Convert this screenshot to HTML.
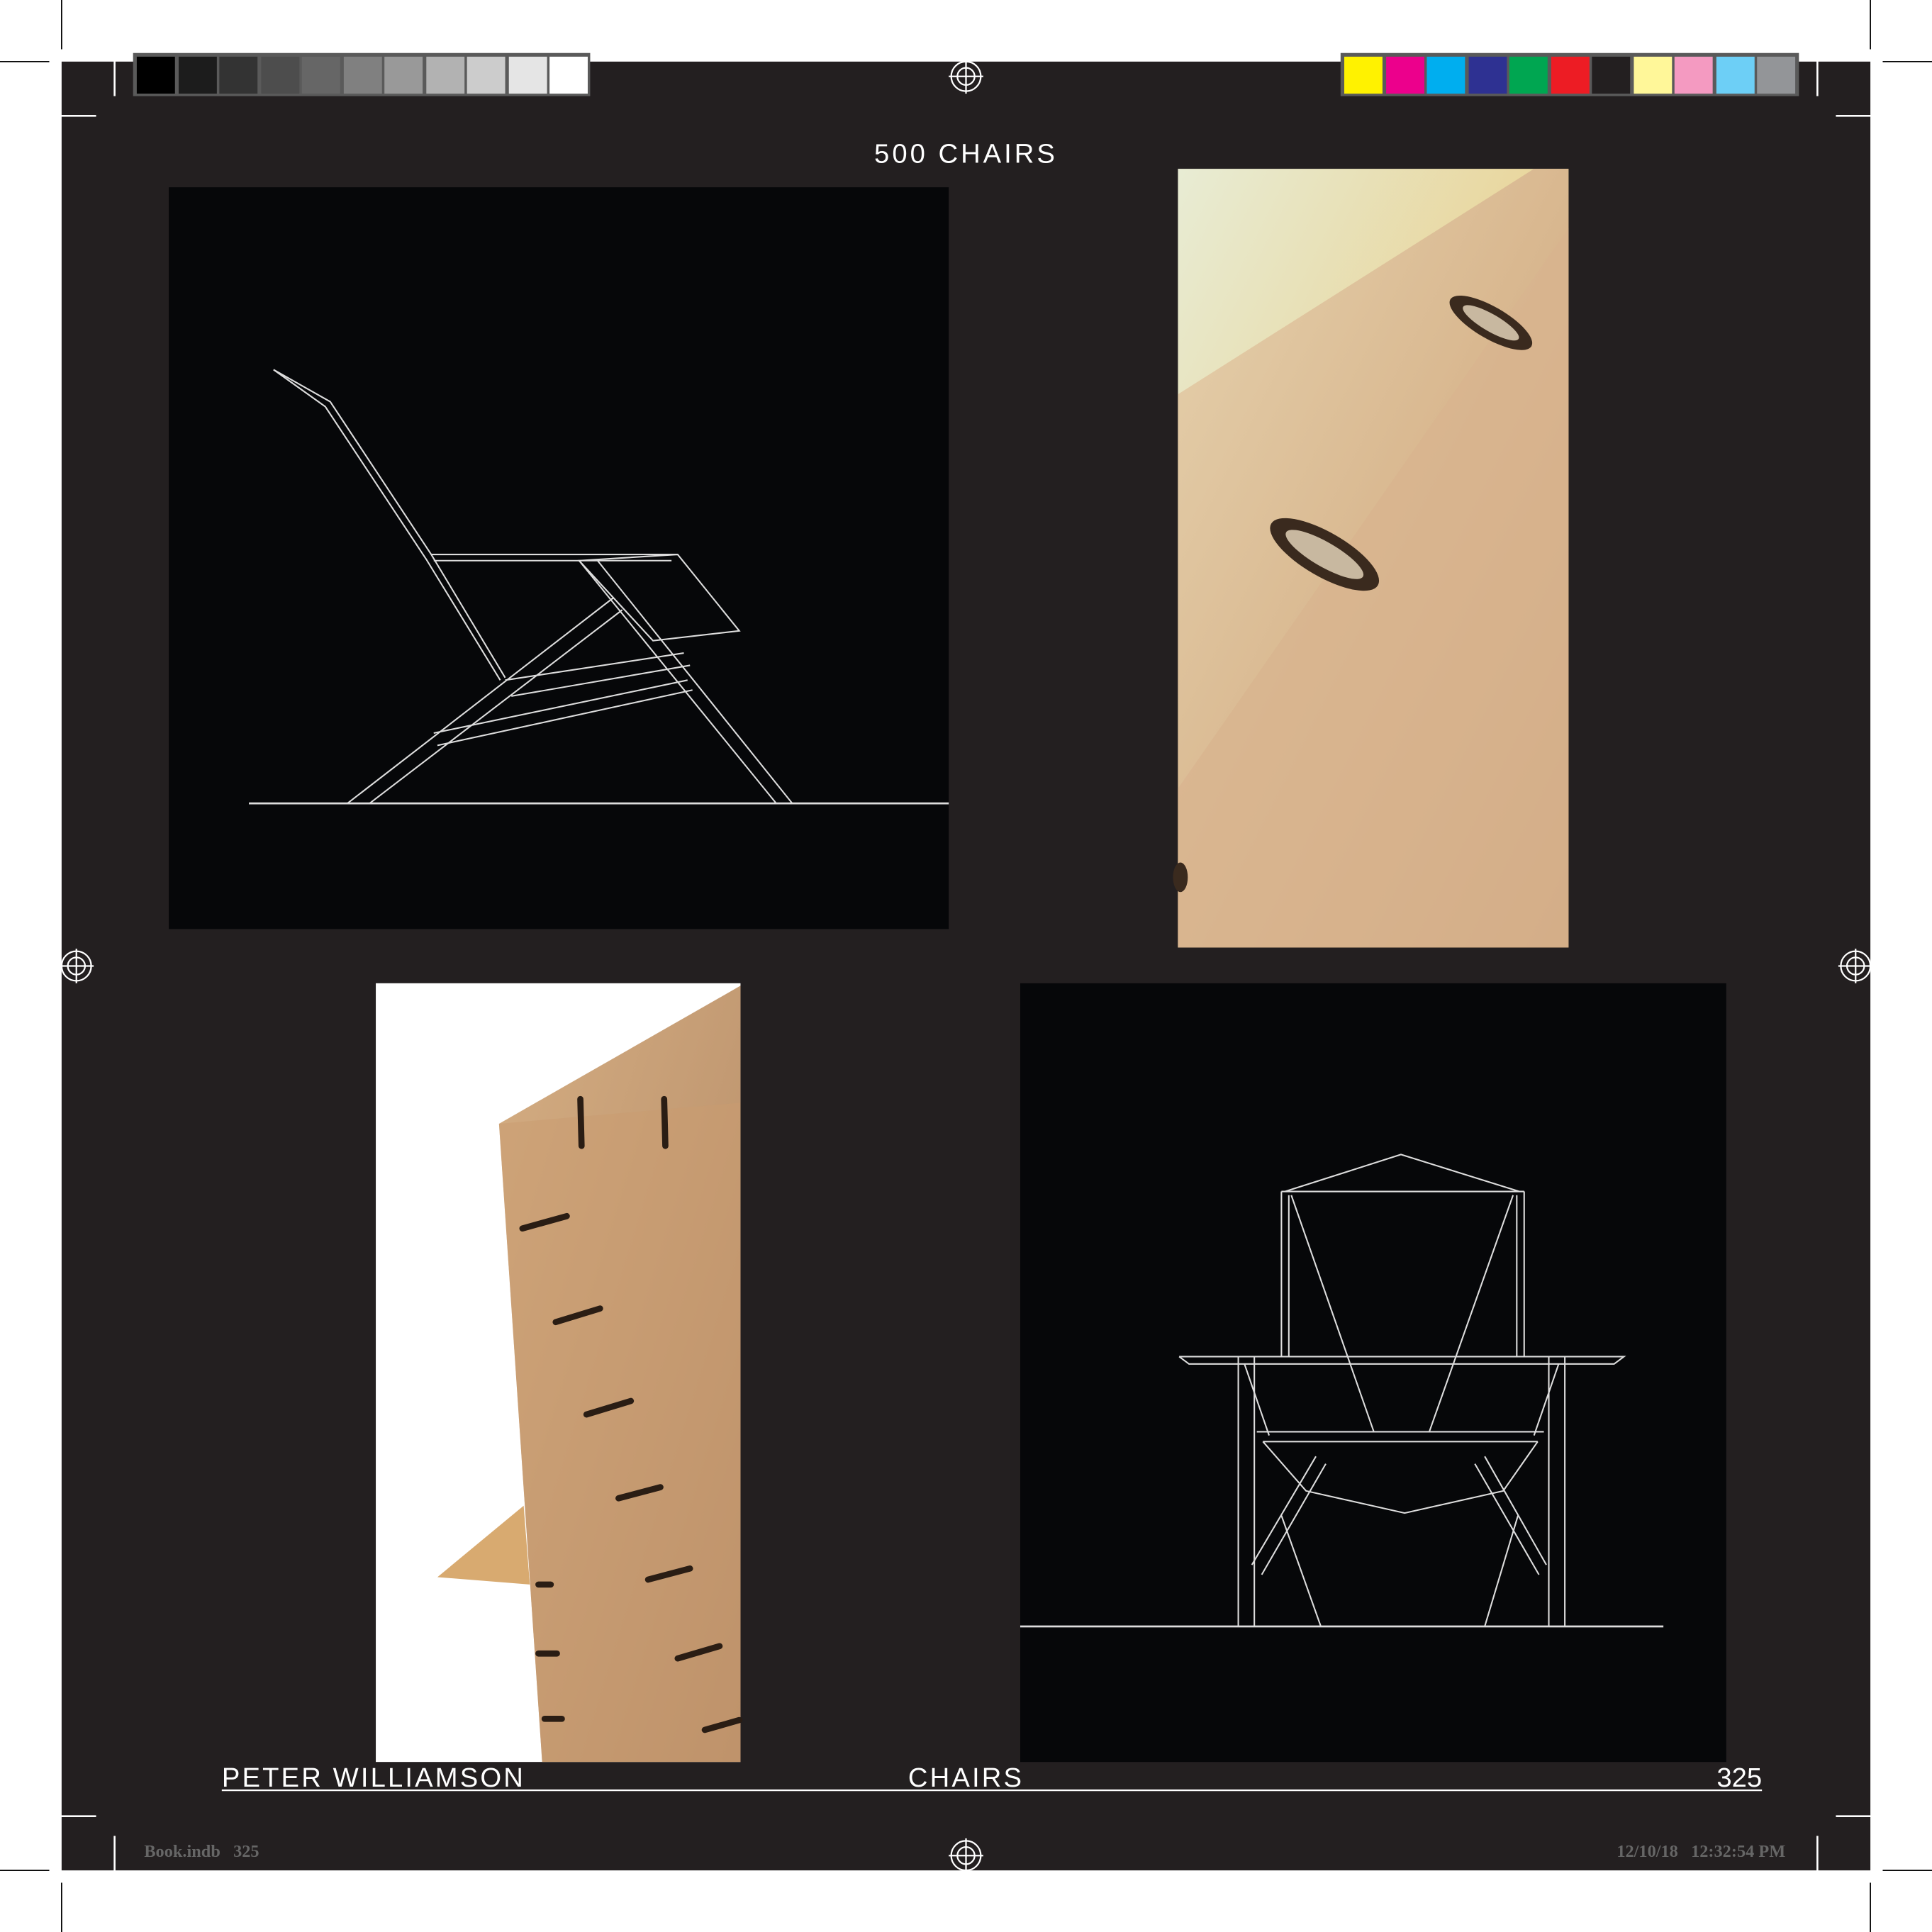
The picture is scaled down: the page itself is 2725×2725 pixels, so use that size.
<!DOCTYPE html>
<html><head><meta charset="utf-8"><style>
html,body{margin:0;padding:0;background:#fff;}
body{width:2725px;height:2725px;overflow:hidden;position:relative;}
#w{position:absolute;left:0;top:0;width:1568px;height:1568px;transform:scale(1.73788);transform-origin:0 0;font-family:"Liberation Sans",sans-serif;}
.a{position:absolute;}
</style></head><body><div id="w">
<div class="a" style="left:50px;top:50px;width:1468px;height:1468px;background:#231f20"></div>
<svg class="a" style="left:0;top:0" width="1568" height="1568" viewBox="0 0 1568 1568">
<g stroke="#000" stroke-width="1">
<line x1="50" y1="0" x2="50" y2="40"/><line x1="0" y1="50" x2="40" y2="50"/>
<line x1="1518" y1="0" x2="1518" y2="40"/><line x1="1528" y1="50" x2="1568" y2="50"/>
<line x1="50" y1="1528" x2="50" y2="1568"/><line x1="0" y1="1518" x2="40" y2="1518"/>
<line x1="1518" y1="1528" x2="1518" y2="1568"/><line x1="1528" y1="1518" x2="1568" y2="1518"/>
</g>
<g stroke="#fff" stroke-width="1.5">
<line x1="93" y1="42" x2="93" y2="78"/><line x1="44" y1="94" x2="78" y2="94"/>
<line x1="1475" y1="42" x2="1475" y2="78"/><line x1="1490" y1="94" x2="1524" y2="94"/>
<line x1="93" y1="1490" x2="93" y2="1524"/><line x1="44" y1="1474" x2="78" y2="1474"/>
<line x1="1475" y1="1490" x2="1475" y2="1524"/><line x1="1490" y1="1474" x2="1524" y2="1474"/>
</g>
<rect x="108" y="43" width="371" height="35" fill="#5a5a5a"/>
<g>
<rect x="111" y="46" width="31" height="30" fill="#000"/>
<rect x="145" y="46" width="31" height="30" fill="#1c1c1c"/>
<rect x="178" y="46" width="31" height="30" fill="#333"/>
<rect x="212" y="46" width="31" height="30" fill="#4d4d4d"/>
<rect x="245" y="46" width="31" height="30" fill="#666"/>
<rect x="279" y="46" width="31" height="30" fill="#808080"/>
<rect x="312" y="46" width="31" height="30" fill="#999"/>
<rect x="346" y="46" width="31" height="30" fill="#b2b2b2"/>
<rect x="379" y="46" width="31" height="30" fill="#ccc"/>
<rect x="413" y="46" width="31" height="30" fill="#e5e5e5"/>
<rect x="446" y="46" width="31" height="30" fill="#fff"/>
</g>
<rect x="1088" y="43" width="372" height="35" fill="#5a5a5a"/>
<g>
<rect x="1091" y="46" width="31" height="30" fill="#fff200"/>
<rect x="1125" y="46" width="31" height="30" fill="#ec008c"/>
<rect x="1158" y="46" width="31" height="30" fill="#00aeef"/>
<rect x="1192" y="46" width="31" height="30" fill="#2e3192"/>
<rect x="1225" y="46" width="31" height="30" fill="#00a651"/>
<rect x="1259" y="46" width="31" height="30" fill="#ed1c24"/>
<rect x="1292" y="46" width="31" height="30" fill="#231f20"/>
<rect x="1326" y="46" width="31" height="30" fill="#fff799"/>
<rect x="1359" y="46" width="31" height="30" fill="#f49ac1"/>
<rect x="1393" y="46" width="31" height="30" fill="#6dcff6"/>
<rect x="1426" y="46" width="31" height="30" fill="#939598"/>
</g>
<g fill="none" stroke="#fff" stroke-width="1.3">
<g><circle cx="784" cy="62" r="12"/><circle cx="784" cy="62" r="7"/><line x1="770" y1="62" x2="798" y2="62"/><line x1="784" y1="48" x2="784" y2="76"/></g>
<g><circle cx="62" cy="784" r="12"/><circle cx="62" cy="784" r="7"/><line x1="48" y1="784" x2="76" y2="784"/><line x1="62" y1="770" x2="62" y2="798"/></g>
<g><circle cx="1506" cy="784" r="12"/><circle cx="1506" cy="784" r="7"/><line x1="1492" y1="784" x2="1520" y2="784"/><line x1="1506" y1="770" x2="1506" y2="798"/></g>
<g><circle cx="784" cy="1506" r="12"/><circle cx="784" cy="1506" r="7"/><line x1="770" y1="1506" x2="798" y2="1506"/><line x1="784" y1="1492" x2="784" y2="1520"/></g>
</g>
<rect x="137" y="152" width="633" height="602" fill="#060709"/>
<g fill="none" stroke="#ddd" stroke-width="1.2">
<polyline points="222,300 268,326 350,450 410,550"/><polyline points="222,300 264,330 346,454 406,552"/>
<line x1="350" y1="450" x2="550" y2="450"/><line x1="352" y1="455" x2="545" y2="455"/>
<polygon points="470,455 550,450 600,512 530,520"/>
<line x1="470" y1="455" x2="630" y2="652"/><line x1="485" y1="455" x2="643" y2="652"/>
<line x1="498" y1="485" x2="282" y2="652"/><line x1="505" y1="495" x2="300" y2="652"/>
<line x1="410" y1="552" x2="555" y2="530"/><line x1="415" y1="565" x2="560" y2="540"/>
<line x1="355" y1="605" x2="562" y2="560"/><line x1="352" y1="595" x2="558" y2="552"/>
<line x1="202" y1="652" x2="770" y2="652" stroke-width="1.6"/>
</g>
<rect x="828" y="798" width="573" height="632" fill="#060709"/>
<g fill="none" stroke="#ddd" stroke-width="1.2">
<polyline points="1043,967 1137,937 1233,967"/>
<line x1="1040" y1="967" x2="1237" y2="967"/>
<line x1="1040" y1="967" x2="1040" y2="1101"/><line x1="1046" y1="970" x2="1046" y2="1101"/>
<line x1="1237" y1="967" x2="1237" y2="1101"/><line x1="1231" y1="970" x2="1231" y2="1101"/>
<line x1="1048" y1="970" x2="1115" y2="1162"/><line x1="1228" y1="970" x2="1160" y2="1162"/>
<polyline points="957,1101 1318,1101 1310,1107 965,1107 957,1101"/>
<line x1="1005" y1="1101" x2="1005" y2="1320"/><line x1="1018" y1="1101" x2="1018" y2="1320"/>
<line x1="1257" y1="1101" x2="1257" y2="1320"/><line x1="1270" y1="1101" x2="1270" y2="1320"/>
<line x1="1020" y1="1162" x2="1253" y2="1162"/><line x1="1025" y1="1170" x2="1248" y2="1170"/>
<polyline points="1025,1170 1060,1210 1140,1228 1220,1210 1248,1170"/>
<line x1="1068" y1="1182" x2="1016" y2="1270"/><line x1="1076" y1="1188" x2="1024" y2="1278"/>
<line x1="1205" y1="1182" x2="1255" y2="1270"/><line x1="1197" y1="1188" x2="1249" y2="1278"/>
<line x1="1040" y1="1230" x2="1072" y2="1320"/><line x1="1232" y1="1230" x2="1205" y2="1320"/>
<line x1="1010" y1="1107" x2="1030" y2="1165"/><line x1="1265" y1="1107" x2="1245" y2="1165"/>
<line x1="828" y1="1320" x2="1350" y2="1320" stroke-width="1.6"/>
</g>
<defs>
<linearGradient id="sky" x1="0" y1="0" x2="1" y2="1"><stop offset="0" stop-color="#e8ecd4"/><stop offset="0.5" stop-color="#e9d59a"/><stop offset="1" stop-color="#d8b060"/></linearGradient>
<linearGradient id="wd" x1="0" y1="0" x2="1" y2="1"><stop offset="0" stop-color="#e6d2ae"/><stop offset="0.5" stop-color="#d9b890"/><stop offset="1" stop-color="#c9a07a"/></linearGradient>
<linearGradient id="wd2" x1="0" y1="0" x2="1" y2="1"><stop offset="0" stop-color="#d4ad82"/><stop offset="1" stop-color="#b48a66"/></linearGradient>
</defs>
<rect x="956" y="137" width="317" height="632" fill="url(#sky)"/>
<polygon points="956,320 1245,137 1273,137 1273,769 956,769" fill="url(#wd)"/>
<polygon points="956,640 1273,185 1273,769 956,769" fill="#d8b48e" opacity="0.7"/>
<g fill="#3a2a1e"><ellipse cx="1210" cy="262" rx="38" ry="13" transform="rotate(30 1210 262)"/><ellipse cx="1075" cy="450" rx="50" ry="18" transform="rotate(30 1075 450)"/><ellipse cx="958" cy="712" rx="6" ry="12"/></g>
<g fill="#c8b8a0"><ellipse cx="1210" cy="262" rx="26" ry="7" transform="rotate(30 1210 262)"/><ellipse cx="1075" cy="450" rx="36" ry="10" transform="rotate(30 1075 450)"/></g>
<rect x="305" y="798" width="296" height="632" fill="#fff"/>
<polygon points="355,1280 425,1222 430,1286" fill="#d8aa70"/>
<polygon points="405,912 601,800 601,1430 440,1430" fill="url(#wd2)"/>
<polygon points="405,912 601,895 601,1430 440,1430" fill="#c99c70" opacity="0.5"/>
<g stroke="#2a1d14" stroke-width="5" stroke-linecap="round">
<line x1="471" y1="892" x2="472" y2="930"/><line x1="539" y1="892" x2="540" y2="930"/>
<line x1="424" y1="997" x2="460" y2="987"/><line x1="451" y1="1073" x2="487" y2="1062"/>
<line x1="476" y1="1148" x2="512" y2="1137"/><line x1="502" y1="1216" x2="536" y2="1207"/>
<line x1="526" y1="1282" x2="560" y2="1273"/><line x1="550" y1="1346" x2="584" y2="1336"/>
<line x1="437" y1="1286" x2="447" y2="1286"/><line x1="437" y1="1342" x2="452" y2="1342"/><line x1="442" y1="1395" x2="456" y2="1395"/><line x1="572" y1="1404" x2="600" y2="1396"/>
</g>
<line x1="180" y1="1453" x2="1430" y2="1453" stroke="#fff" stroke-width="1.3"/>
</svg>
<div class="a" style="left:0;width:1568px;top:112px;text-align:center;color:#fff;font-size:22px;letter-spacing:2.3px">500 CHAIRS</div>
<div class="a" style="left:180px;top:1430px;color:#fff;font-size:22px;letter-spacing:1.8px">PETER WILLIAMSON</div>
<div class="a" style="left:0;width:1568px;top:1430px;text-align:center;color:#fff;font-size:22px;letter-spacing:1.8px">CHAIRS</div>
<div class="a" style="right:138px;top:1430px;color:#fff;font-size:22px">325</div>
<div class="a" style="left:117px;top:1496px;color:#666;font-size:14px;font-weight:bold;font-family:'Liberation Serif',serif">Book.indb&nbsp;&nbsp;&nbsp;325</div>
<div class="a" style="right:119px;top:1496px;color:#666;font-size:14px;font-weight:bold;font-family:'Liberation Serif',serif">12/10/18&nbsp;&nbsp;&nbsp;12:32:54 PM</div>
</div></body></html>
